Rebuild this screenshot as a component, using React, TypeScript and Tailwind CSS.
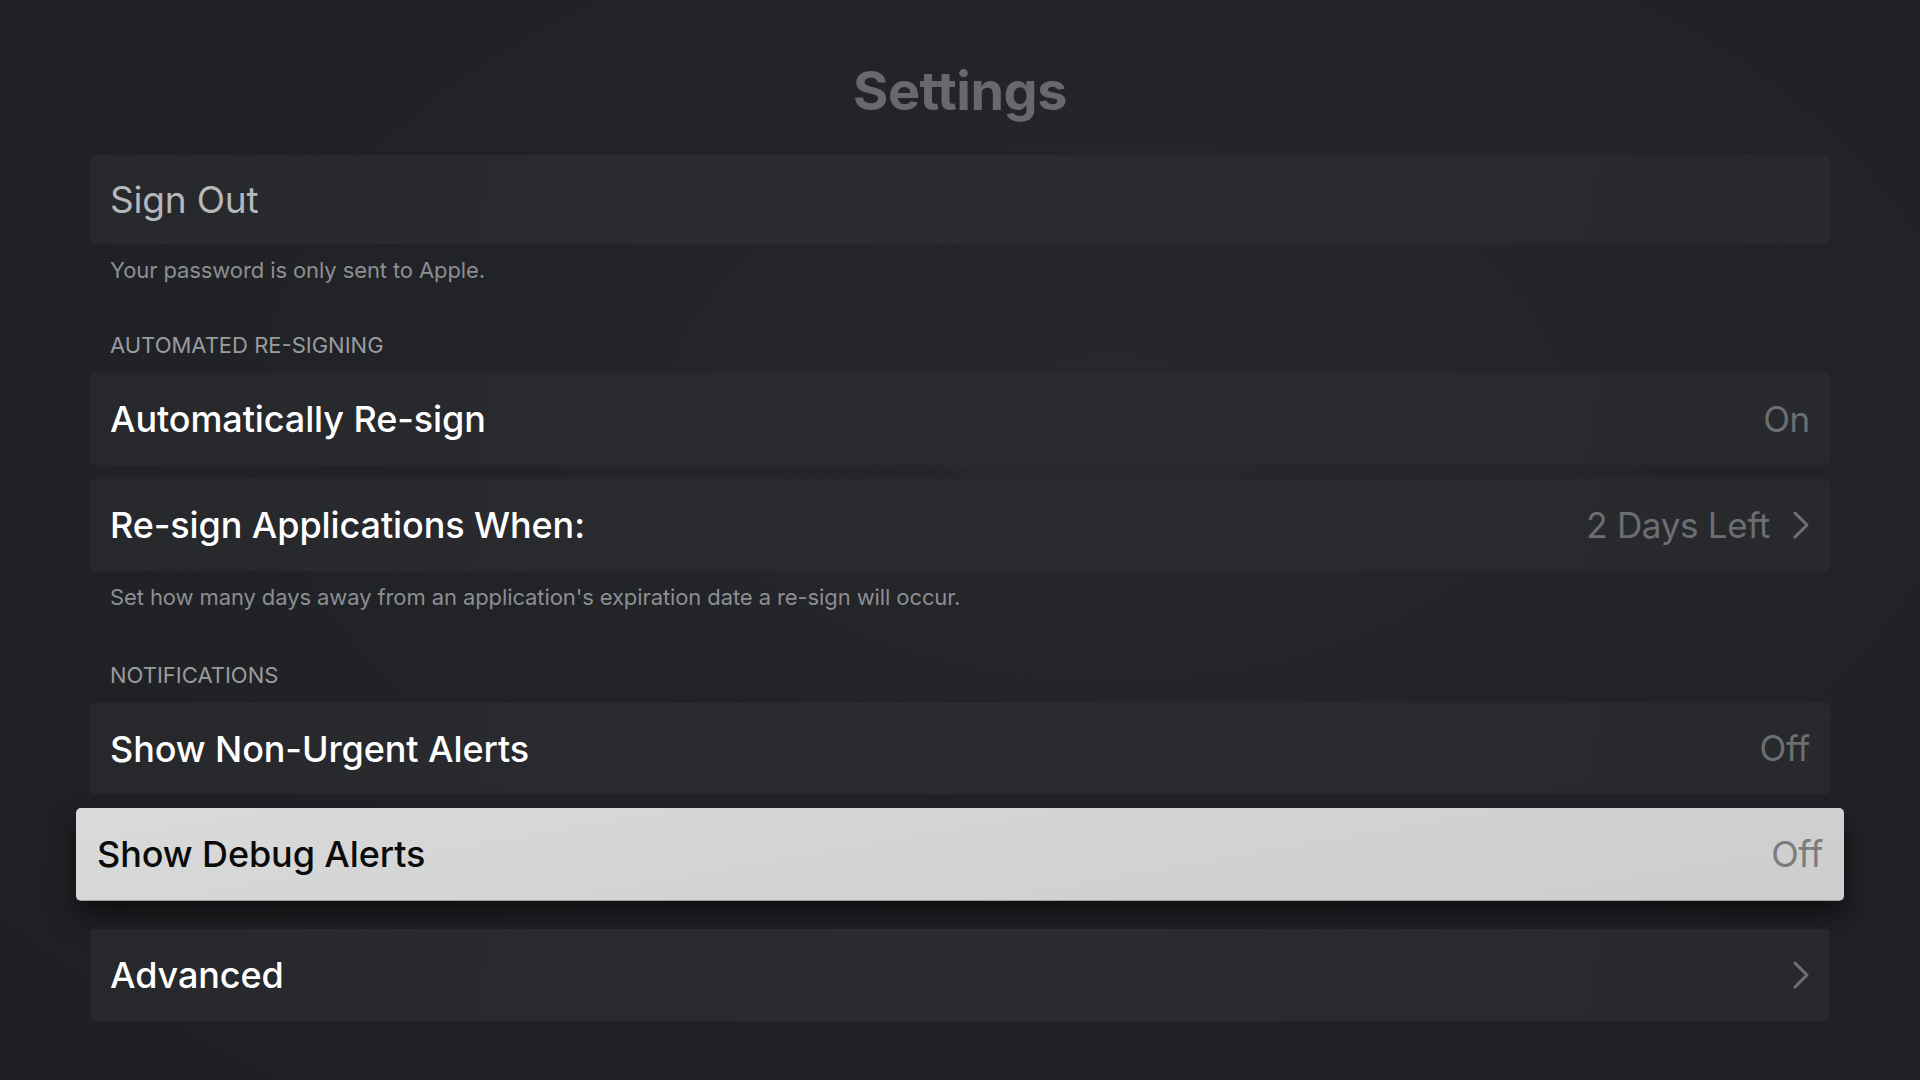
import React from "react";

const Chevron = () => (
  <svg width="18" height="30" viewBox="0 0 18 30" className="shrink-0">
    <polyline
      points="3,3 15,15 3,27"
      fill="none"
      stroke="#6f7074"
      strokeWidth="3"
      strokeLinecap="round"
      strokeLinejoin="round"
    />
  </svg>
);

type RowProps = {
  label: string;
  value?: string;
  chevron?: boolean;
  dim?: boolean;
  className?: string;
};

const Row: React.FC<RowProps> = ({ label, value, chevron, dim, className }) => (
  <div
    className={
      "flex items-center justify-between rounded-[5px] bg-[linear-gradient(100deg,#26282b_0%,#2a2c30_50%,#27292c_100%)] pl-5 pr-5 " +
      (className ?? "h-[92px]")
    }
  >
    <span
      className={
        dim
          ? "text-[37px] tracking-[-0.2px] text-[#b6b7ba]"
          : "text-[36px] font-medium tracking-[-0.1px] text-white"
      }
    >
      {label}
    </span>
    <div className="flex items-center gap-[22px]">
      {value && <span className="text-[35px] tracking-[-0.3px] text-[#6d6e72]">{value}</span>}
      {chevron && <Chevron />}
    </div>
  </div>
);

const Note = ({ children, className = "" }: { children: React.ReactNode; className?: string }) => (
  <p className={"pl-5 text-[22px] leading-[22px] tracking-[-0.1px] text-[#8d8e92] " + className}>{children}</p>
);

const Header = ({ children, className = "" }: { children: React.ReactNode; className?: string }) => (
  <p className={"pl-5 text-[22px] leading-[22px] uppercase text-[#9a9b9f] " + className}>{children}</p>
);

export default function App() {
  return (
    <div
      className="h-[1080px] w-full overflow-hidden bg-[radial-gradient(ellipse_at_58%_38%,#26282c_0%,#212327_45%,#1d1f22_100%)]"
      style={{ fontFamily: "Inter, 'Noto Sans', sans-serif" }}
    >
      <h1 className="mt-[64px] text-center text-[54px] font-bold leading-[54px] tracking-[-0.5px] text-[#68696d]">
        Settings
      </h1>

      <div className="mx-auto flex w-[1740px] flex-col">
        <Row label="Sign Out" dim className="mt-[37px] h-[89px]" />
        <Note className="mt-[15px]">Your password is only sent to Apple.</Note>

        <Header className="mt-[53px]">Automated Re-signing</Header>
        <Row label="Automatically Re-sign" value="On" className="mt-[17px] h-[92px]" />
        <Row label="Re-sign Applications When:" value="2 Days Left" chevron className="mt-[14px] h-[92px]" />
        <Note className="mt-[15px]">
          Set how many days away from an application's expiration date a re-sign will occur.
        </Note>

        <Header className="mt-[56px]">Notifications</Header>
        <Row label="Show Non-Urgent Alerts" value="Off" className="mt-[17px] h-[91px]" />

        <div className="-mx-[14px] mt-[14px] flex h-[93px] items-center justify-between rounded-[5px] border-b border-[#9c9c9c] bg-[linear-gradient(170deg,#d9dada_0%,#d2d2d2_55%,#cdcdcd_100%)] pl-[21px] pr-[21px] shadow-[0_14px_26px_rgba(0,0,0,0.55)]">
          <span className="text-[36px] font-medium tracking-[-0.1px] text-[#0b0b0b]">Show Debug Alerts</span>
          <span className="text-[36px] tracking-[-0.3px] text-[#7c7c7c]">Off</span>
        </div>

        <Row label="Advanced" chevron className="mt-[28px] h-[92px]" />
      </div>
    </div>
  );
}
